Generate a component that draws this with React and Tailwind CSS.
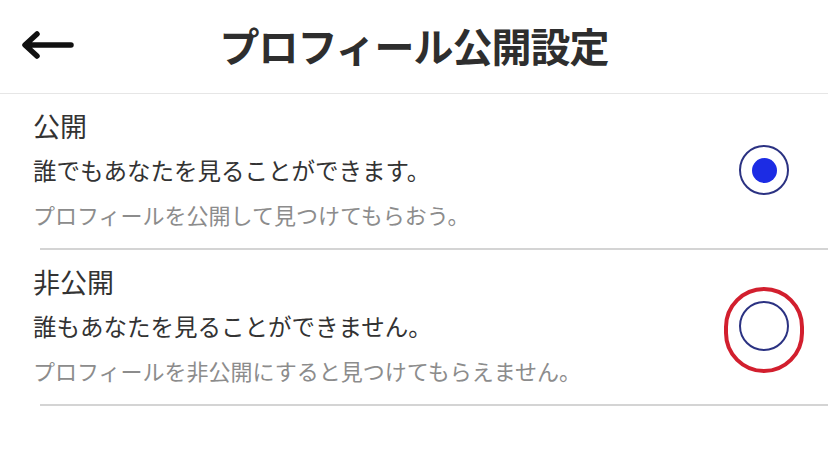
import { useState } from "react";

const FONT = {
  fontFamily: '"Noto Sans CJK JP", "Noto Sans", sans-serif',
};

const OPTIONS = [
  {
    key: "public",
    label: "公開",
    desc: "誰でもあなたを見ることができます。",
    note: "プロフィールを公開して見つけてもらおう。",
  },
  {
    key: "private",
    label: "非公開",
    desc: "誰もあなたを見ることができません。",
    note: "プロフィールを非公開にすると見つけてもらえません。",
    marked: true,
  },
];

const Radio = ({ checked, marked }) => (
  <div className="relative w-[50px] h-[50px] shrink-0">
    <div className="w-[50px] h-[50px] rounded-full border-2 border-[#2b3282] flex items-center justify-center">
      {checked && <div className="w-[25px] h-[25px] rounded-full bg-[#1c2ce4]" />}
    </div>
    {/* red annotation ring */}
    {marked && (
      <div className="absolute left-[-15px] top-[-14px] w-[80px] h-[86px] rounded-full border-[4px] border-[#d21f2e]" />
    )}
  </div>
);

const App = () => {
  const [selected, setSelected] = useState("public");

  return (
    <div className="w-[828px] h-[475px] bg-white text-[#333]" style={FONT}>
      {/* Header */}
      <header className="relative h-[94px] flex items-center justify-center border-b border-[#e6e6e6]">
        <button type="button" className="absolute left-[21px] top-[31px]">
          <svg width="54" height="28" viewBox="0 0 54 28" fill="none">
            <path
              d="M16 3 L4 14 L16 25 M5 14 H50"
              stroke="#111"
              strokeWidth="5.5"
              strokeLinecap="round"
              strokeLinejoin="round"
            />
          </svg>
        </button>
        <h1 className="text-[40px] font-bold tracking-[-1px] text-[#2e2e2e] leading-none -mt-[4px]">
          プロフィール公開設定
        </h1>
      </header>

      {/* Options */}
      {OPTIONS.map((opt) => (
        <div key={opt.key}>
          <button
            type="button"
            onClick={() => setSelected(opt.key)}
            className="w-full flex items-center pl-[33px] pr-[39px] pt-[10px] pb-[12px] text-left"
          >
            <div className="flex-1">
              <div className="h-[44px] leading-[44px] text-[27px] text-[#333]">{opt.label}</div>
              <div className="h-[44px] leading-[44px] text-[23.5px] text-[#333]">{opt.desc}</div>
              <div className="h-[44px] leading-[44px] text-[22px] text-[#8c8c8c]">{opt.note}</div>
            </div>
            <Radio checked={selected === opt.key} marked={opt.marked} />
          </button>
          <div className="ml-[40px] h-[2px] bg-[#d4d4d4]" />
        </div>
      ))}
    </div>
  );
};

export default App;
